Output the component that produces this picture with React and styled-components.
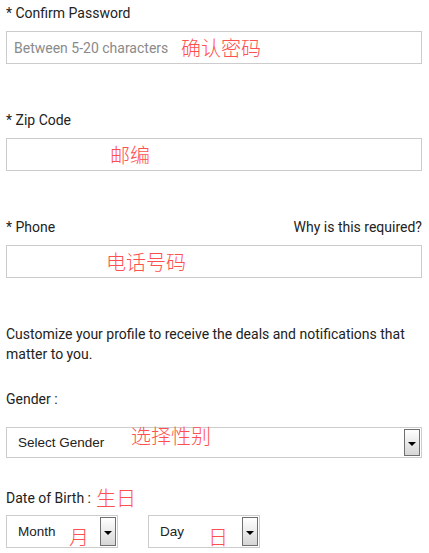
import React from "react";
import styled, { createGlobalStyle } from "styled-components";

const Global = createGlobalStyle`
  html, body { margin: 0; padding: 0; background: #fff; }
  body { font-family: Roboto, "Liberation Sans", Arial, sans-serif; color: #222; }
`;

const Page = styled.div`
  width: 416px;
  padding: 4px 0 0 6px;
  display: flex;
  flex-direction: column;
`;

const Field = styled.div`
  position: relative;
  display: flex;
  flex-direction: column;
  margin-bottom: ${(p) => p.$mb || 0}px;
`;

const LabelRow = styled.div`
  display: flex;
  justify-content: space-between;
  align-items: center;
  height: 18px;
  font-size: 14px;
  line-height: 18px;
  color: #222;
  margin-bottom: ${(p) => p.$gap ?? 9}px;
`;

const TextBox = styled.div`
  box-sizing: border-box;
  height: 33px;
  border: 1px solid #cccccc;
  display: flex;
  align-items: center;
  padding-left: 7px;
  font-size: 14px;
  color: #8a8a8a;
`;

const Note = styled.span`
  position: absolute;
  left: ${(p) => p.$x}px;
  top: ${(p) => p.$y}px;
  font-family: "Noto Sans CJK SC", sans-serif;
  font-size: 20px;
  line-height: 22px;
  color: #ff5050;
  font-weight: 300;
  white-space: nowrap;
  pointer-events: none;
`;

const Para = styled.p`
  margin: 0 0 26px 0;
  font-size: 14px;
  line-height: 20px;
  color: #222;
`;

const SelectBox = styled.div`
  box-sizing: border-box;
  width: ${(p) => p.$w}px;
  height: ${(p) => p.$h || 33}px;
  border: 1px solid #cccccc;
  display: flex;
  align-items: center;
  justify-content: space-between;
  padding: 1px 1px 1px 11px;
  font-family: "Liberation Sans", Arial, sans-serif;
  font-size: 13.5px;
  color: #222;
`;

const Arrow = styled.div`
  box-sizing: border-box;
  width: 16px;
  align-self: stretch;
  border: 1px solid #6f6f6f;
  background: linear-gradient(#ffffff, #d6d6d6);
  display: flex;
  align-items: center;
  justify-content: center;
  padding-top: 2px;
  &::after {
    content: "";
    border-left: 4px solid transparent;
    border-right: 4px solid transparent;
    border-top: 4px solid #000;
  }
`;

const DateRow = styled.div`
  display: flex;
  gap: 30px;
`;

export default function App() {
  return (
    <>
      <Global />
      <Page>
        <Field $mb={47}>
          <LabelRow>* Confirm Password</LabelRow>
          <TextBox>Between 5-20 characters</TextBox>
          <Note $x={175} $y={33}>确认密码</Note>
        </Field>
        <Field $mb={47}>
          <LabelRow>* Zip Code</LabelRow>
          <TextBox />
          <Note $x={104} $y={33}>邮编</Note>
        </Field>
        <Field $mb={46}>
          <LabelRow>
            <span>* Phone</span>
            <span>Why is this required?</span>
          </LabelRow>
          <TextBox />
          <Note $x={100} $y={33}>电话号码</Note>
        </Field>
        <Para>
          Customize your profile to receive the deals and notifications that
          matter to you.
        </Para>
        <Field $mb={31}>
          <LabelRow $gap={19}>Gender :</LabelRow>
          <SelectBox $w={416} $h={31}>
            <span>Select Gender</span>
            <Arrow />
          </SelectBox>
          <Note $x={125} $y={35}>选择性别</Note>
        </Field>
        <Field>
          <LabelRow $gap={8}>Date of Birth :</LabelRow>
          <Note $x={90} $y={-2}>生日</Note>
          <DateRow>
            <SelectBox $w={112}>
              <span>Month</span>
              <Arrow />
            </SelectBox>
            <SelectBox $w={112}>
              <span>Day</span>
              <Arrow />
            </SelectBox>
          </DateRow>
          <Note $x={63} $y={37}>月</Note>
          <Note $x={202} $y={37}>日</Note>
        </Field>
      </Page>
    </>
  );
}
